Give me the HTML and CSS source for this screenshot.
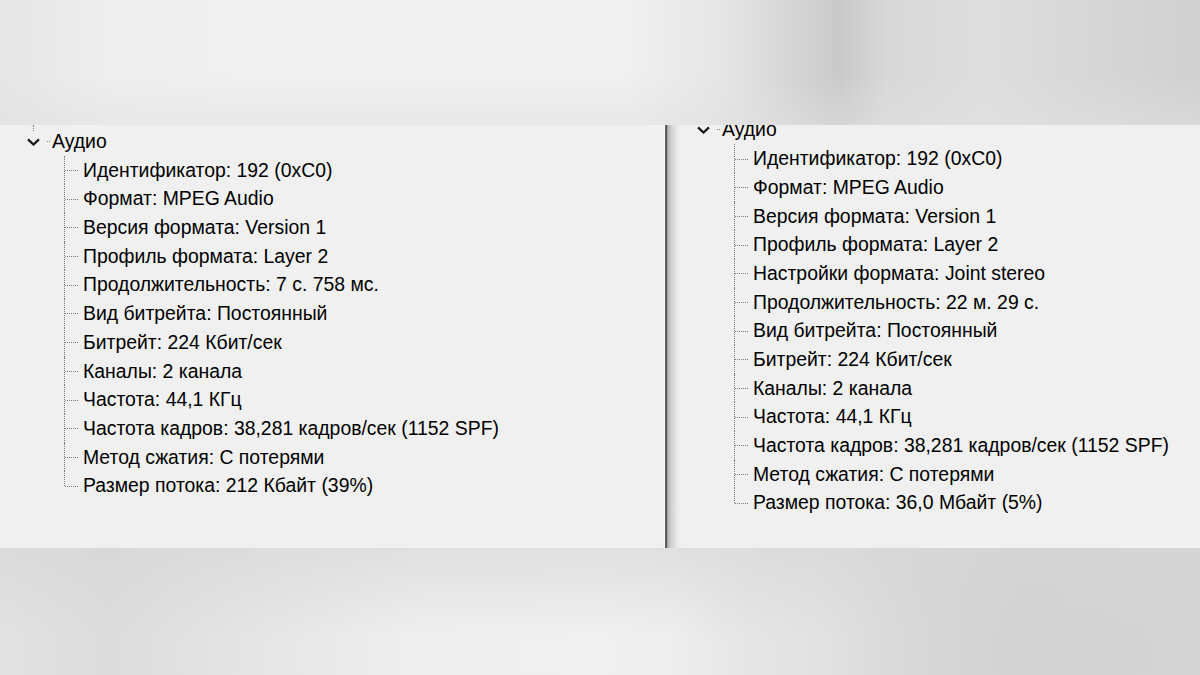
FILE: index.html
```html
<!DOCTYPE html>
<html lang="ru">
<head>
<meta charset="utf-8">
<title>MediaInfo — Аудио</title>
<link rel="stylesheet" href="styles.css">
</head>
<body>
<div class="band band-top"></div>
<div class="panels">
  <section class="panel panel-left">
    <div class="stub"></div>
    <div class="tree">
      <div class="node-head">
        <svg class="chev" width="13" height="8" viewBox="0 0 13 8"><path d="M1 1.3 L6.5 6.5 L12 1.3" fill="none" stroke="#1a1a1a" stroke-width="2.3"/></svg>
        <span class="head-dot"></span>
        <span class="label">Аудио</span>
      </div>
      <ul class="children">
        <li class="item">Идентификатор: 192 (0xC0)</li>
        <li class="item">Формат: MPEG Audio</li>
        <li class="item">Версия формата: Version 1</li>
        <li class="item">Профиль формата: Layer 2</li>
        <li class="item">Продолжительность: 7 с. 758 мс.</li>
        <li class="item">Вид битрейта: Постоянный</li>
        <li class="item">Битрейт: 224 Кбит/сек</li>
        <li class="item">Каналы: 2 канала</li>
        <li class="item">Частота: 44,1 КГц</li>
        <li class="item">Частота кадров: 38,281 кадров/сек (1152 SPF)</li>
        <li class="item">Метод сжатия: С потерями</li>
        <li class="item">Размер потока: 212 Кбайт (39%)</li>
      </ul>
    </div>
  </section>
  <div class="divider"></div>
  <section class="panel panel-right">
    <div class="tree tree-shifted">
      <div class="node-head">
        <svg class="chev" width="13" height="8" viewBox="0 0 13 8"><path d="M1 1.3 L6.5 6.5 L12 1.3" fill="none" stroke="#1a1a1a" stroke-width="2.3"/></svg>
        <span class="head-dot"></span>
        <span class="label">Аудио</span>
      </div>
      <ul class="children">
        <li class="item">Идентификатор: 192 (0xC0)</li>
        <li class="item">Формат: MPEG Audio</li>
        <li class="item">Версия формата: Version 1</li>
        <li class="item">Профиль формата: Layer 2</li>
        <li class="item">Настройки формата: Joint stereo</li>
        <li class="item">Продолжительность: 22 м. 29 с.</li>
        <li class="item">Вид битрейта: Постоянный</li>
        <li class="item">Битрейт: 224 Кбит/сек</li>
        <li class="item">Каналы: 2 канала</li>
        <li class="item">Частота: 44,1 КГц</li>
        <li class="item">Частота кадров: 38,281 кадров/сек (1152 SPF)</li>
        <li class="item">Метод сжатия: С потерями</li>
        <li class="item">Размер потока: 36,0 Мбайт (5%)</li>
      </ul>
    </div>
  </section>
</div>
<div class="band band-bottom"></div>
</body>
</html>
```
FILE: styles.css
```css
* { box-sizing: border-box; }
html, body {
  margin: 0;
  padding: 0;
  width: 1200px;
  height: 675px;
  overflow: hidden;
  background: #f0f0f0;
  font-family: "Liberation Sans", Arial, sans-serif;
}
.band { width: 1200px; }
.band-top {
  height: 125px;
  background:
    linear-gradient(180deg, rgba(240,240,240,0) 60%, rgba(225,225,225,0.5) 100%),
    linear-gradient(90deg, #e6e6e6 0%, #eeeeee 9%, #f0f0f0 20%, #f0f0f0 52%, #e6e6e6 60%, #d2d2d2 67%, #c9c9c9 70%, #d8d8d8 74%, #dedede 82%, #d6d6d6 92%, #d0d0d0 100%);
}
.band-bottom {
  height: 127px;
  background:
    linear-gradient(180deg, rgba(214,214,214,0.6) 0%, rgba(240,240,240,0) 70%),
    linear-gradient(90deg, #e2e2e2 0%, #dcdcdc 9%, #e6e6e6 22%, #efefef 35%, #f0f0f0 50%, #eeeeee 56%, #e6e6e6 62%, #e2e2e2 68%, #d8d8d8 76%, #d2d2d2 85%, #d4d4d4 100%);
}
.panels {
  display: flex;
  height: 423px;
  background: #f0f0f0;
}
.panel {
  overflow: hidden;
  position: relative;
  color: #000;
  font-size: 19.4px;
}
.panel-left {
  width: 664px;
  padding: 2px 0 0 27px;
}
.panel-right {
  flex: 1;
  padding-left: 17px;
}
.divider {
  width: 16px;
  background: linear-gradient(90deg, #fbfbfb 0, #fbfbfb 1px, #5c5c5c 1px, #5c5c5c 3px, #8c8c8c 3px, #b4b4b4 4px, #cfcfcf 7px, #e6e6e6 12px, #f0f0f0 16px);
}
.stub {
  position: absolute;
  left: 33px;
  top: 0;
  height: 6px;
  border-left: 1px dotted #7a7a7a;
}
.tree-shifted { margin-top: -9.5px; }
.node-head {
  height: 28.7px;
  display: flex;
  align-items: center;
}
.chev { display: block; margin-top: 1px; }
.head-dot {
  width: 3px;
  margin-left: 7px;
  border-top: 1px dotted #7a7a7a;
  margin-right: 2px;
}
.label { line-height: 1; }
.children {
  list-style: none;
  margin: 0 0 0 37px;
  padding: 0;
}
.item {
  position: relative;
  height: 28.7px;
  line-height: 28.7px;
  padding-left: 19px;
  white-space: nowrap;
}
.item::before {
  content: "";
  position: absolute;
  left: 0;
  top: 0;
  height: 100%;
  border-left: 1px dotted #7a7a7a;
}
.item:last-child::before { height: 50%; }
.item::after {
  content: "";
  position: absolute;
  left: 1px;
  top: 50%;
  width: 13px;
  border-top: 1px dotted #7a7a7a;
}
```
